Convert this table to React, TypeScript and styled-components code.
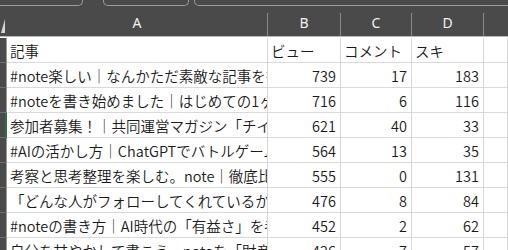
import React from "react";
import styled, { createGlobalStyle } from "styled-components";

const GlobalStyle = createGlobalStyle`
    html, body {
        margin: 0;
        padding: 0;
        background: #ffffff;
        overflow: hidden;
    }
`;

const DARK = "#4a4a4a";
const GRID = "#d9d9d9";
const FONT = `"Noto Sans CJK JP", "Noto Sans", sans-serif`;

const Page = styled.div`
    width: 508px;
    height: 250px;
    overflow: hidden;
    background: #ffffff;
    font-family: ${FONT};
`;

const TopBar = styled.div`
    height: 13px;
    background: ${DARK};
    display: flex;
    align-items: flex-start;
    gap: 5px;
`;

const FieldBox = styled.div<{ $width: number; $left?: number; $open?: boolean }>`
    box-sizing: border-box;
    width: ${({ $width }) => $width}px;
    margin-left: ${({ $left }) => $left || 0}px;
    height: 6px;
    border: 1px solid #9b9b9b;
    border-top: none;
    border-left: ${({ $open }) => ($open ? "none" : "1px solid #9b9b9b")};
    border-radius: ${({ $open }) => ($open ? "0 0 5px 0" : "0 0 5px 5px")};
    flex-shrink: 0;
`;

const Sheet = styled.div`
    display: grid;
    grid-template-columns: 7px 261px 73px 71px 72px 1fr;
    grid-auto-rows: 25px;
`;

const Corner = styled.div`
    height: 23px;
    background: ${DARK};
    border-bottom: 1px solid #b8b8b8;
    position: relative;
    &::after {
        content: "";
        position: absolute;
        right: 2px;
        bottom: 3px;
        width: 0;
        height: 0;
        border-left: 4px solid transparent;
        border-bottom: 14px solid #d6d6d6;
    }
`;

const ColHead = styled.div<{ $last?: boolean }>`
    height: 23px;
    background: ${DARK};
    border-bottom: 1px solid #b8b8b8;
    border-right: ${({ $last }) => ($last ? "none" : "1px solid #8c8c8c")};
    color: #f2f2f2;
    font-family: "Noto Sans", sans-serif;
    font-size: 14px;
    line-height: 1;
    display: flex;
    align-items: center;
    justify-content: center;
    span {
        margin-top: -3px;
    }
`;

const RowHead = styled.div<{ $active?: boolean }>`
    background: ${DARK};
    border-bottom: 1px solid #6e6e6e;
    border-right: 1px solid ${({ $active }) => ($active ? "#217346" : "#9b9b9b")};
    box-shadow: ${({ $active }) => ($active ? "inset -1px 0 0 #217346" : "none")};
`;

const Cell = styled.div<{ $num?: boolean }>`
    overflow: hidden;
    white-space: nowrap;
    border-right: 1px solid ${GRID};
    border-bottom: 1px solid ${GRID};
    color: #1a1a1a;
    font-size: 14.5px;
    font-weight: 350;
    line-height: 24px;
    padding: 1px ${({ $num }) => ($num ? "4px" : "0")} 0 3px;
    text-align: ${({ $num }) => ($num ? "right" : "left")};
`;

const columns = ["A", "B", "C", "D"];

const rows: [string, number, number, number][] = [
    ["#note楽しい｜なんかただ素敵な記事を書きたい", 739, 17, 183],
    ["#noteを書き始めました｜はじめての1ヶ月", 716, 6, 116],
    ["参加者募集！｜共同運営マガジン「チイ」", 621, 40, 33],
    ["#AIの活かし方｜ChatGPTでバトルゲーム", 564, 13, 35],
    ["考察と思考整理を楽しむ。note｜徹底比較", 555, 0, 131],
    ["「どんな人がフォローしてくれているか」", 476, 8, 84],
    ["#noteの書き方｜AI時代の「有益さ」を考える", 452, 2, 62],
    ["自分を甘やかして書こう。noteを「財産」に", 426, 7, 57],
];

export default function App() {
    return (
        <Page>
            <GlobalStyle />
            <TopBar>
                <FieldBox $width={83} $open />
                <FieldBox $width={86} $left={15} />
                <FieldBox $width={330} />
            </TopBar>
            <Sheet>
                <Corner />
                {columns.map((c) => (
                    <ColHead key={c}>
                        <span>{c}</span>
                    </ColHead>
                ))}
                <ColHead $last />

                <RowHead />
                <Cell>記事</Cell>
                <Cell>ビュー</Cell>
                <Cell>コメント</Cell>
                <Cell>スキ</Cell>
                <Cell />

                {rows.map(([title, views, comments, likes], i) => (
                    <React.Fragment key={i}>
                        <RowHead $active={i === 2} />
                        <Cell>{title}</Cell>
                        <Cell $num>{views}</Cell>
                        <Cell $num>{comments}</Cell>
                        <Cell $num>{likes}</Cell>
                        <Cell />
                    </React.Fragment>
                ))}
            </Sheet>
        </Page>
    );
}
